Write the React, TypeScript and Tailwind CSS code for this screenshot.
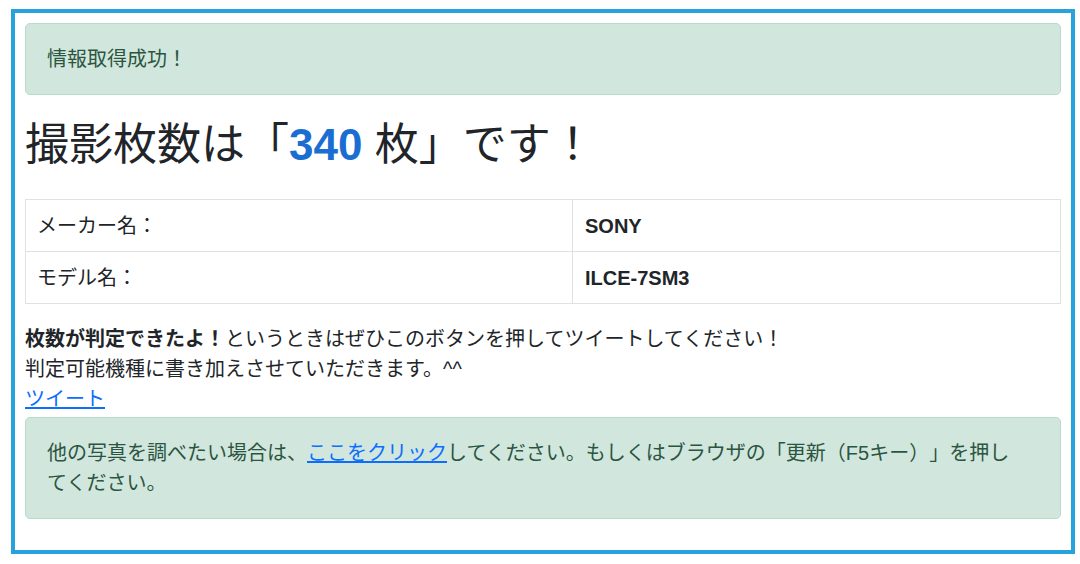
export default function App() {
  const font = { fontFamily: '"Liberation Sans", "Noto Sans CJK JP", sans-serif' };
  return (
    <div className="h-[564px] w-[1080px] bg-white text-[#212529] [text-spacing-trim:space-all]" style={font}>
      <div className="ml-[11px] w-[1064px] pt-[9px]">
        <div className="border-4 border-[#27a2dc] px-[10px] pt-[10px] pb-[31px]">
          {/* success alert */}
          <div className="rounded-[5px] border border-[#badbcc] bg-[#d1e7dd] px-[21px] py-[20px] text-[20px] leading-[30px] text-[#2c5541]">
            情報取得成功！
          </div>

          <h1 className="mt-[24px] mb-[28px] text-[44px] font-normal leading-[52px]">
            撮影枚数は「<span className="font-bold text-[#1b6ed1]">340</span> 枚」です！
          </h1>

          <table className="w-full border-collapse text-[20px] leading-[30px]">
            <tbody>
              <tr className="h-[52px]">
                <td className="w-[547px] border border-[#dee2e6] px-[11px]">メーカー名：</td>
                <td className="border border-[#dee2e6] px-[12px] font-bold">SONY</td>
              </tr>
              <tr className="h-[52px]">
                <td className="border border-[#dee2e6] px-[11px]">モデル名：</td>
                <td className="border border-[#dee2e6] px-[12px] font-bold">ILCE-7SM3</td>
              </tr>
            </tbody>
          </table>

          <p className="mt-[20px] text-[20px] leading-[30px]">
            <b>枚数が判定できたよ！</b>というときはぜひこのボタンを押してツイートしてください！
            <br />
            判定可能機種に書き加えさせていただきます。^^
            <br />
            <a href="#" className="text-[#0d6efd] underline">
              ツイート
            </a>
          </p>

          {/* info alert */}
          <div className="mt-[3px] rounded-[5px] border border-[#badbcc] bg-[#d1e7dd] py-[20px] pl-[21px] pr-[40px] text-[20px] leading-[30px] text-[#2c5541]">
            他の写真を調べたい場合は、
            <a href="#" className="text-[#0d6efd] underline">
              ここをクリック
            </a>
            してください。もしくはブラウザの「更新（F5キー）」を押してください。
          </div>
        </div>
      </div>
    </div>
  );
}
